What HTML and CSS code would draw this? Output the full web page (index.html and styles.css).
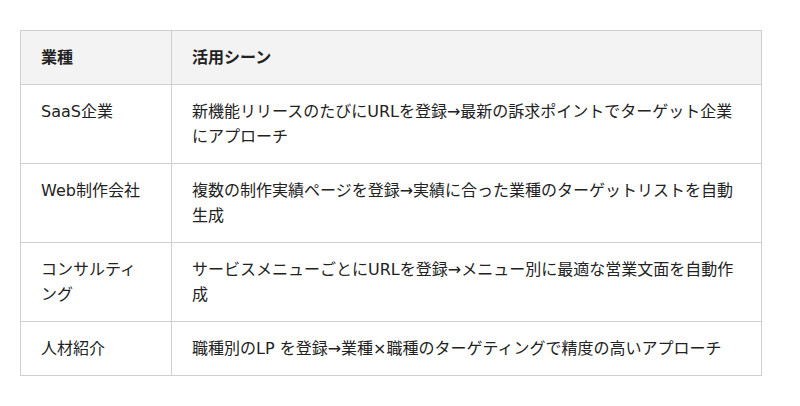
FILE: index.html
```html
<!DOCTYPE html>
<html lang="ja">
<head>
<meta charset="utf-8">
<link rel="stylesheet" href="styles.css">
</head>
<body>
<table class="usecase">
  <thead>
    <tr><th class="col-industry">業種</th><th>活用シーン</th></tr>
  </thead>
  <tbody>
    <tr><td>SaaS企業</td><td>新機能リリースのたびにURLを登録→最新の訴求ポイントでターゲット企業にアプローチ</td></tr>
    <tr><td>Web制作会社</td><td>複数の制作実績ページを登録→実績に合った業種のターゲットリストを自動生成</td></tr>
    <tr><td>コンサルティング</td><td>サービスメニューごとにURLを登録→メニュー別に最適な営業文面を自動作成</td></tr>
    <tr><td>人材紹介</td><td>職種別のLP を登録→業種×職種のターゲティングで精度の高いアプローチ</td></tr>
  </tbody>
</table>
</body>
</html>
```

FILE: styles.css
```css
html, body {
  margin: 0;
  background: #ffffff;
}
body {
  padding: 30px 20px;
  font-family: "DejaVu Sans", "Noto Sans CJK JP", sans-serif;
  font-size: 16px;
  color: #222222;
}
.usecase {
  width: 742px;
  border-collapse: collapse;
  table-layout: fixed;
}
.usecase th,
.usecase td {
  border: 1px solid #cfcfcf;
  padding: 14px 20px;
  line-height: 25px;
  text-align: left;
  vertical-align: top;
}
.usecase th {
  background: #f3f3f3;
  font-weight: bold;
}
.col-industry {
  width: 110px;
}
```
